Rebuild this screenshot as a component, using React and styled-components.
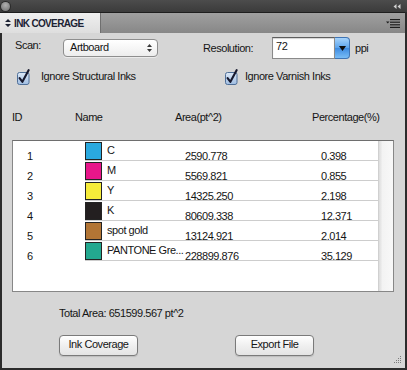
import React from 'react';
import styled, { createGlobalStyle } from 'styled-components';

const Global = createGlobalStyle`
  *, *::before, *::after { box-sizing: border-box; }
  html, body { margin: 0; padding: 0; background: #2c2c2c; }
  #root { width: 407px; height: 370px; }
`;

const Panel = styled.div`
  width: 407px;
  height: 370px;
  display: flex;
  flex-direction: column;
  background: #2c2c2c;
  font-family: "Liberation Sans", Arial, sans-serif;
  font-size: 11px;
  line-height: 13px;
  letter-spacing: -0.45px;
  color: #151515;
`;

const TitleBar = styled.div`
  height: 12px;
  display: flex;
  align-items: center;
  justify-content: space-between;
  padding: 0 6px 0 1px;
  background: linear-gradient(#4c4c4c, #3b3b3b);
`;

const Dot = styled.div`
  width: 9px;
  height: 9px;
  border-radius: 50%;
  background: radial-gradient(circle at 50% 35%, #b0b0b0, #6c6c6c);
  box-shadow: 0 0 0 1px #2a2a2a;
`;

const TabBar = styled.div`
  height: 21px;
  display: flex;
  align-items: stretch;
  border-top: 1px solid #1e1e1e;
  background: linear-gradient(#a0a0a0, #878787);
  margin-right: 2px;
`;

const Tab = styled.div`
  width: 101px;
  display: flex;
  align-items: center;
  gap: 3px;
  padding-left: 5px;
  background: linear-gradient(#efefef, #dedede);
  font-weight: bold;
  font-size: 10px;
  letter-spacing: -0.65px;
  color: #1c2233;
  border-right: 1px solid #6f6f6f;
`;

const TabFill = styled.div`
  flex: 1;
  display: flex;
  align-items: center;
  justify-content: flex-end;
  padding-right: 5px;
`;

const Body = styled.div`
  position: relative;
  flex: 1;
  margin: 0 2px 2px 2px;
  background: #d6d6d6;
  display: flex;
  flex-direction: column;
  padding: 0 10px;
`;

const FormRow = styled.div`
  display: flex;
  align-items: center;
  height: 22px;
  margin-top: 4px;
`;

const Label = styled.span`
  width: ${p => p.$w}px;
  margin-left: ${p => p.$ml || 0}px;
  margin-bottom: ${p => p.$mb || 0}px;
`;

const Select = styled.div`
  width: 95px;
  height: 18px;
  border: 1px solid #8e8e8e;
  border-radius: 4px;
  background: linear-gradient(#ffffff, #ededed);
  display: flex;
  align-items: center;
  justify-content: space-between;
  padding: 0 5px 1px 6px;
  box-shadow: 0 1px 0 rgba(255,255,255,0.5);
`;

const TextInput = styled.div`
  width: 63px;
  height: 22px;
  background: #fff;
  border: 1px solid #8a8a8a;
  border-top-color: #5e5e5e;
  box-shadow: inset 0 1px 1px rgba(0,0,0,0.18);
  padding: 2px 3px;
`;

const DropButton = styled.div`
  width: 15px;
  height: 22px;
  border-radius: 0 4px 4px 0;
  border: 1px solid #3f74b4;
  border-left: none;
  background: linear-gradient(#a6d3fb, #5aa3ec 50%, #3d8ae0 51%, #79bdf6);
  display: flex;
  align-items: center;
  justify-content: center;
`;

const Unit = styled.span`
  margin-left: 5px;
`;

const CheckRow = styled.div`
  display: flex;
  align-items: center;
  height: 14px;
  margin-top: 11px;
  padding-left: 5px;
`;

const CheckItem = styled.label`
  display: flex;
  align-items: center;
  gap: ${p => p.$gap}px;
  width: ${p => (p.$w ? `${p.$w}px` : 'auto')};
`;

const CheckText = styled.span`
  margin-top: -1px;
`;

const HeaderRow = styled.div`
  display: grid;
  grid-template-columns: 63px 100px 137px auto;
  margin-top: 27px;
  padding-left: 0;
`;

const ListBox = styled.div`
  margin-top: 16px;
  width: 382px;
  height: 152px;
  border: 1px solid #878787;
  border-top-color: #6e6e6e;
  display: flex;
`;

const ListContent = styled.div`
  flex: 1;
  background: #fff;
  display: flex;
  flex-direction: column;
`;

const Scrollbar = styled.div`
  width: 15px;
  background: linear-gradient(90deg, #dcdcdc, #f3f3f3 25%, #f8f8f8);
  border-left: 1px solid #d0d0d0;
`;

const Row = styled.div`
  display: flex;
  height: 20px;
`;

const IdCell = styled.div`
  width: 72px;
  padding-left: 14px;
  padding-top: 9px;
`;

const RowMain = styled.div`
  flex: 1;
  display: flex;
  border-bottom: 1px solid #cdcdcd;
`;

const Swatch = styled.div`
  width: 17px;
  height: 18px;
  margin-top: 1px;
  border: 1px solid #232323;
  background: ${p => p.$c};
`;

const NameCell = styled.div`
  width: 83px;
  padding-left: 5px;
  padding-top: 3px;
  white-space: nowrap;
`;

const NumCell = styled.div`
  width: ${p => (p.$w ? `${p.$w}px` : 'auto')};
  flex: ${p => (p.$w ? 'none' : 1)};
  padding-top: 9px;
`;

const Total = styled.div`
  margin-top: 15px;
  margin-left: 47px;
`;

const ButtonRow = styled.div`
  display: flex;
  gap: 97px;
  margin-top: 15px;
  margin-left: 47px;
`;

const Button = styled.div`
  width: 79px;
  height: 21px;
  border: 1px solid #7a7a7a;
  border-radius: 4px;
  background: linear-gradient(#ffffff, #f0f0f0 50%, #e4e4e4);
  box-shadow: 0 1px 1px rgba(0,0,0,0.12);
  display: flex;
  align-items: center;
  justify-content: center;
  padding-bottom: 2px;
`;

const Grip = styled.svg`
  position: absolute;
  right: 3px;
  bottom: 4px;
`;

const Checkbox = () => (
  <svg width="13" height="16" viewBox="0 0 13 16">
    <defs>
      <linearGradient id="cbg" x1="0" y1="0" x2="0" y2="1">
        <stop offset="0" stopColor="#dde9f7" />
        <stop offset="1" stopColor="#9fbde2" />
      </linearGradient>
    </defs>
    <rect x="0.5" y="3.5" width="11.5" height="12" rx="2" fill="url(#cbg)" stroke="#4f6f98" />
    <path d="M2.6 9.2 L5.4 12.8 L11.6 1.2" fill="none" stroke="#17192e" strokeWidth="2.1" strokeLinecap="round" strokeLinejoin="round" />
  </svg>
);

const rows = [
  { id: 1, color: '#2aa9df', name: 'C', area: '2590.778', pct: '0.398' },
  { id: 2, color: '#e8168a', name: 'M', area: '5569.821', pct: '0.855' },
  { id: 3, color: '#f6ec3a', name: 'Y', area: '14325.250', pct: '2.198' },
  { id: 4, color: '#231f20', name: 'K', area: '80609.338', pct: '12.371' },
  { id: 5, color: '#b27535', name: 'spot gold', area: '13124.921', pct: '2.014' },
  { id: 6, color: '#23a88f', name: 'PANTONE Gre...', area: '228899.876', pct: '35.129' },
];

export default function App() {
  return (
    <>
      <Global />
      <Panel>
        <TitleBar>
          <Dot />
          <svg width="8" height="5" viewBox="0 0 8 5">
            <path d="M3.5 0 L0.5 2.5 L3.5 5 Z M7.5 0 L4.5 2.5 L7.5 5 Z" fill="#cfcfcf" />
          </svg>
        </TitleBar>
        <TabBar>
          <Tab>
            <svg width="6" height="8" viewBox="0 0 6 8">
              <path d="M3 0 L6 3 L0 3 Z M3 8 L6 5 L0 5 Z" fill="#1c2233" />
            </svg>
            INK COVERAGE
          </Tab>
          <TabFill>
            <svg width="14" height="9" viewBox="0 0 14 9">
              <path d="M0 2.5 L3.5 2.5 L1.75 4.5 Z" fill="#1e1e1e" />
              <rect x="4" y="0" width="10" height="1.2" fill="#1e1e1e" />
              <rect x="4" y="2.6" width="10" height="1.2" fill="#1e1e1e" />
              <rect x="4" y="5.2" width="10" height="1.2" fill="#1e1e1e" />
              <rect x="4" y="7.8" width="10" height="1.2" fill="#1e1e1e" />
            </svg>
          </TabFill>
        </TabBar>
        <Body>
          <FormRow>
            <Label $w={48} $ml={3} $mb={5}>Scan:</Label>
            <Select>
              <span>Artboard</span>
              <svg width="5" height="8" viewBox="0 0 5 8">
                <path d="M2.5 0 L5 3 L0 3 Z M2.5 8 L5 5 L0 5 Z" fill="#3a3a3a" />
              </svg>
            </Select>
            <Label $w={69} $ml={45}>Resolution:</Label>
            <TextInput>72</TextInput>
            <DropButton>
              <svg width="7" height="5" viewBox="0 0 7 5">
                <path d="M0 0 L7 0 L3.5 5 Z" fill="#0d0d0d" />
              </svg>
            </DropButton>
            <Unit>ppi</Unit>
          </FormRow>
          <CheckRow>
            <CheckItem $gap={11} $w={208}>
              <Checkbox />
              <CheckText>Ignore Structural Inks</CheckText>
            </CheckItem>
            <CheckItem $gap={7}>
              <Checkbox />
              <CheckText>Ignore Varnish Inks</CheckText>
            </CheckItem>
          </CheckRow>
          <HeaderRow>
            <span>ID</span>
            <span>Name</span>
            <span>Area(pt^2)</span>
            <span>Percentage(%)</span>
          </HeaderRow>
          <ListBox>
            <ListContent>
              {rows.map(r => (
                <Row key={r.id}>
                  <IdCell>{r.id}</IdCell>
                  <RowMain>
                    <Swatch $c={r.color} />
                    <NameCell>{r.name}</NameCell>
                    <NumCell $w={136}>{r.area}</NumCell>
                    <NumCell>{r.pct}</NumCell>
                  </RowMain>
                </Row>
              ))}
            </ListContent>
            <Scrollbar />
          </ListBox>
          <Total>Total Area: 651599.567 pt^2</Total>
          <ButtonRow>
            <Button>Ink Coverage</Button>
            <Button>Export File</Button>
          </ButtonRow>
          <Grip width="8" height="8" viewBox="0 0 8 8">
            {[[6, 0], [6, 2], [4, 2], [6, 4], [4, 4], [2, 4], [6, 6], [4, 6], [2, 6], [0, 6]].map(([x, y], i) => (
              <rect key={i} x={x} y={y} width="1" height="1" fill="#7a7a7a" />
            ))}
          </Grip>
        </Body>
      </Panel>
    </>
  );
}
